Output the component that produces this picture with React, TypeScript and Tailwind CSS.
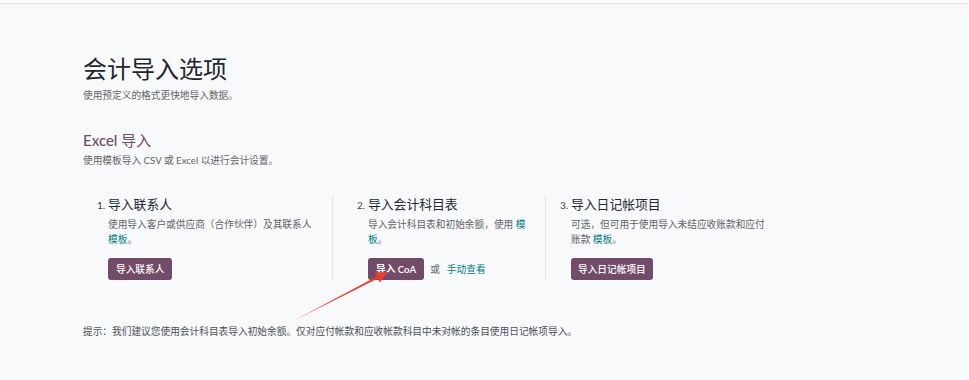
import React from 'react';

const font = { fontFamily: '"Lato", "Noto Sans CJK SC", sans-serif' };

function StepColumn({
  num,
  title,
  children,
  className,
  descWidth,
}: {
  num: string;
  title: string;
  children: React.ReactNode;
  className: string;
  descWidth: string;
}) {
  return (
    <div className={className}>
      <div className="grid grid-cols-[11px_1fr]">
        <span className="text-[10px] leading-[18px] text-[#374151] pt-[1px]">{num}</span>
        <h3 className="text-[12.8px] leading-[18px] font-normal text-[#1f2937]">{title}</h3>
        <div />
        <div className={descWidth}>{children}</div>
      </div>
    </div>
  );
}

export default function App() {
  return (
    <div className="relative min-h-[380px] bg-white" style={font}>
      <div className="h-[3px] bg-white" />
      <div className="border-t border-[#dedede] bg-[#f8f9fb] min-h-[377px] px-[83px] pt-[51px] mr-[1px]">
        <h1 className="text-[24px] leading-[28px] text-[#212529]">会计导入选项</h1>
        <p className="mt-[5px] text-[9.7px] leading-[15px] text-[#5f6368]">使用预定义的格式更快地导入数据。</p>

        <h2 className="mt-[27px] text-[15px] leading-[20px] font-medium text-[#714b67]">
          Excel <span className="font-normal">导入</span>
        </h2>
        <p className="mt-[3px] text-[9.7px] leading-[15px] text-[#5f6368]">使用模板导入 CSV 或 Excel 以进行会计设置。</p>

        <div className="mt-[27px] flex">
          <StepColumn num="1." title="导入联系人" className="w-[249px] pl-[14px]" descWidth="w-[208px]">
            <p className="mt-[3px] text-[9.7px] leading-[15px] text-[#5f6368]">
              使用导入客户或供应商（合作伙伴）及其联系人 <a className="text-[#017e84]">模板</a>。
            </p>
            <button className="mt-[11px] h-[22px] px-[8px] rounded-[3px] bg-[#714b67] text-white text-[9.7px] font-medium">
              导入联系人
            </button>
          </StepColumn>

          <StepColumn num="2." title="导入会计科目表" className="w-[213px] border-l border-[#e4e5e7] pl-[24px]" descWidth="w-[162px]">
            <p className="mt-[3px] text-[9.7px] leading-[15px] text-[#5f6368]">
              导入会计科目表和初始余额，使用 <a className="text-[#017e84]">模板</a>。
            </p>
            <div className="mt-[11px] flex items-center gap-[6px]">
              <button className="h-[22px] px-[8px] rounded-[3px] bg-[#714b67] text-white text-[9.7px] font-semibold">
                导入 CoA
              </button>
              <span className="text-[9.7px] text-[#5f6368]">或</span>
              <a className="ml-[1px] text-[9.7px] text-[#017e84]">手动查看</a>
            </div>
          </StepColumn>

          <StepColumn num="3." title="导入日记帐项目" className="w-[240px] border-l border-[#e4e5e7] pl-[14px]" descWidth="w-[198px]">
            <p className="mt-[3px] text-[9.7px] leading-[15px] text-[#5f6368]">
              可选，但可用于使用导入未结应收账款和应付账款 <a className="text-[#017e84]">模板</a>。
            </p>
            <button className="mt-[11px] h-[22px] px-[7px] rounded-[3px] bg-[#714b67] text-white text-[9.7px] font-medium">
              导入日记帐项目
            </button>
          </StepColumn>
        </div>

        <p className="mt-[44px] text-[9.7px] leading-[15px] text-[#4b4f56]">
          提示：我们建议您使用会计科目表导入初始余额。仅对应付帐款和应收帐款科目中未对帐的条目使用日记帐项导入。
        </p>
      </div>

      {/* red annotation arrow */}
      <svg className="absolute left-0 top-0 pointer-events-none" width="969" height="380">
        <polygon points="295,320 377.8,278.5 376.8,276.5" fill="#f03a2b" />
        <polygon points="388,272 379.8,282.4 374.8,272.8" fill="#f03a2b" />
      </svg>
    </div>
  );
}
